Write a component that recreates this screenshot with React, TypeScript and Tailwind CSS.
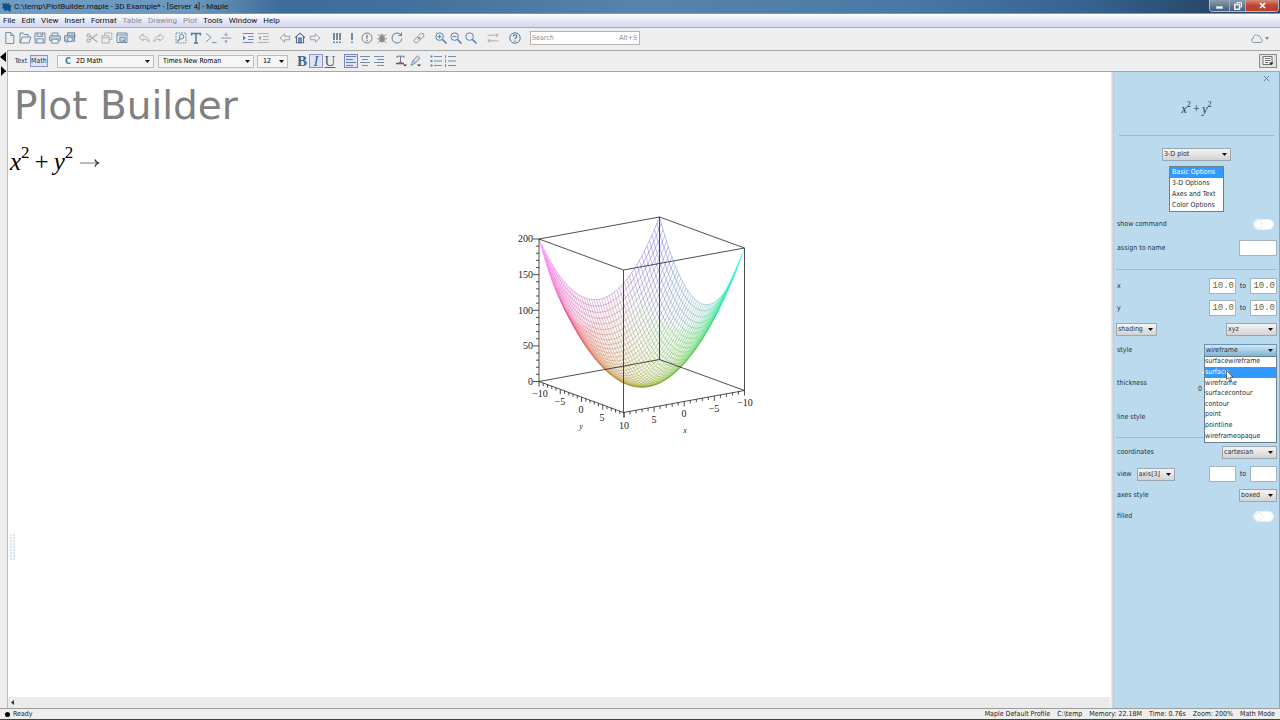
import { useState } from 'react';
import type { ReactNode } from 'react';
import clsx from 'clsx';

const BLUE = '#6483a3';
const GREY = '#a8a8a8';

interface IconProps {
    color?: string;
    width?: number;
    children: ReactNode;
}

function Icon({ color = BLUE, width = 0.9, children }: IconProps) {
    return (
        <svg
            className="w-3.5 h-3.5 shrink-0"
            viewBox="0 0 14 14"
            fill="none"
            stroke={color}
            strokeWidth={width}
            aria-hidden="true"
        >
            {children}
        </svg>
    );
}

interface Tool {
    label: string;
    icon: ReactNode;
}

const toolGroups: Tool[][] = [
    [
        { label: 'New', icon: <Icon><path d="M2.8 1.5h5l3 3v8h-8zM7.800 1.500v3h3" /></Icon> },
        { label: 'Open', icon: <Icon><path d="M2 12V2h3.2l1 1.5h4V6M2 12l2.400-6h8.600L11 12z" /></Icon> },
        { label: 'Save', icon: <Icon><path d="M2 2h10v10H2zM4.200 2v3.400h5.400V2M8 2.800v1.600M3.800 12V7.800h6.400V12" /></Icon> },
        {
            label: 'Print',
            icon: (
                <Icon>
                    <path d="M4 4.800V2h6v2.800" />
                    <rect x="1.6" y="4.8" width="10.8" height="5" rx="1" fill="#c3ccd6" />
                    <path d="M3.800 8.200h6.400v4H3.800z" fill="#f4f4f4" />
                </Icon>
            ),
        },
        {
            label: 'Print Preview',
            icon: (
                <Icon>
                    <path d="M4.500 4.500V1.800h7.200v4M1.600 4.800h10v5.400h-10z" fill="#c3ccd6" />
                    <circle cx="7" cy="8.4" r="2.4" fill="#eee" />
                    <path d="M5.200 10.200 3.400 12.400M9 7.500l3.500-3" />
                </Icon>
            ),
        },
    ],
    [
        {
            label: 'Cut',
            icon: (
                <Icon color={GREY} width={1.1}>
                    <circle cx="3.6" cy="4.4" r="1.6" />
                    <circle cx="3.6" cy="9.6" r="1.6" />
                    <path d="M5 5.300 12.400 11M5 8.700 12.400 3" />
                </Icon>
            ),
        },
        { label: 'Copy', icon: <Icon color={GREY}><path d="M4.500 4.200V2h7.300v6.400H9.400M2 4.800h7.200v7.200H2zM2 6.800h7.200" /></Icon> },
        { label: 'Paste', icon: <Icon><path d="M2 2h10v9.500H2zM2 4h10" /><path d="M4.800 6.200h5.400v4H4.800z" fill="#c5d3e0" /><path d="m8 9 3 3.300" /></Icon> },
    ],
    [
        { label: 'Undo', icon: <Icon color={GREY}><path d="M2 6.400 6.200 3v2c3.400 0 5.600 2 6 6-1.600-2.100-3.300-3-6-3v2z" /></Icon> },
        { label: 'Redo', icon: <Icon color={GREY}><path d="M12 6.400 7.800 3v2c-3.400 0-5.600 2-6 6 1.600-2.100 3.300-3 6-3v2z" /></Icon> },
    ],
    [
        {
            label: 'Code Region',
            icon: (
                <Icon width={1}>
                    <path d="M2 2h10v10H2z" strokeDasharray="1.6 1.1" />
                    <circle cx="7.6" cy="5.8" r="2.2" />
                    <path d="M6 7.600 3.400 10.600" strokeWidth="1.4" />
                </Icon>
            ),
        },
        { label: 'Text', icon: <Icon color="#4f79a3" width={1.5}><path d="M2.600 4.400v-2h8.800v2M7 2.400v9.400M5 11.900h4" /></Icon> },
        { label: 'Prompt', icon: <Icon><path d="m2.200 2.400 5 4-5 4.400M8 11.600h4.600" /></Icon> },
        { label: 'Section', icon: <Icon color="#7f93a8"><path d="M2 7h10M7 1.500v3M5.500 3.200 7 4.800l1.500-1.600M7 12.500v-3M5.500 10.800 7 9.200l1.500 1.600" /></Icon> },
    ],
    [
        { label: 'Indent', icon: <Icon><path d="M1.600 2.500h11M7 5.500h5.600M7 8.500h5.600M1.600 11.500h11" /><path d="m2 4.600 3 2.400-3 2.400z" fill={BLUE} stroke="none" /></Icon> },
        { label: 'Outdent', icon: <Icon color={GREY}><path d="M1.600 2.500h11M7 5.500h5.600M7 8.500h5.600M1.600 11.500h11" /><path d="m5 4.600-3 2.400 3 2.400z" fill={GREY} stroke="none" /></Icon> },
    ],
    [
        { label: 'Back', icon: <Icon color="#8d99a8"><path d="m2 7 4.600-4.200v2.400h5v3.600h-5v2.400z" /></Icon> },
        { label: 'Home', icon: <Icon color="#4c6e94" width={1.1}><path d="m2 6.600 5-4.400 5 4.400M3.500 5.800v6h7v-6" /><path d="M5.800 7h2.400v4.600H5.800z" fill="#8ba3bd" /></Icon> },
        { label: 'Forward', icon: <Icon color="#8d99a8"><path d="M12 7 7.400 2.800v2.400h-5v3.600h5v2.400z" /></Icon> },
    ],
    [
        { label: 'Execute All', icon: <Icon color="#446d95" width={1.5}><path d="M4 2v7M7 2v7M10 2v7M4 10.400V12M7 10.400V12M10 10.400V12" /></Icon> },
        { label: 'Execute', icon: <Icon color="#446d95" width={1.5}><path d="M7 2v7M7 10.400V12" /></Icon> },
        { label: 'Interrupt', icon: <Icon color="#858585" width={1}><circle cx="7" cy="7" r="5" /><path d="M7 3.800v4M7 8.800v1.400" strokeWidth="1.4" /></Icon> },
        {
            label: 'Debug',
            icon: (
                <Icon color="#8a8a8a">
                    <ellipse cx="7" cy="7.8" rx="2.4" ry="3.3" fill="#8a8a8a" />
                    <path d="M5.400 3.800h3.200M5 5 2.600 3.400M9 5l2.400-1.600M4.600 7.800H2M9.400 7.800H12M5 9.800l-2.400 2M9 9.800l2.400 2" />
                </Icon>
            ),
        },
        { label: 'Restart', icon: <Icon color="#5580aa" width={1}><path d="M11 4A5 5 0 1 0 12 7.600" /><path d="M11.500 1.500v3h-3" /></Icon> },
    ],
    [
        {
            label: 'Link',
            icon: (
                <Icon color="#8a9aab">
                    <ellipse cx="9" cy="5.2" rx="3.3" ry="2.3" transform="rotate(-40 9 5.2)" />
                    <ellipse cx="5" cy="9" rx="3.3" ry="2.3" transform="rotate(-40 5 9)" />
                    <path d="m5.500 8.600 3-3" />
                </Icon>
            ),
        },
    ],
    [
        { label: 'Zoom In', icon: <Icon color="#5c82a8" width={1}><circle cx="5.6" cy="5.6" r="3.8" /><path d="M3.600 5.600h4M5.600 3.600v4" /><path d="m8.500 8.500 4 4" strokeWidth="1.7" /></Icon> },
        { label: 'Zoom Out', icon: <Icon color="#5c82a8" width={1}><circle cx="5.6" cy="5.6" r="3.8" /><path d="M3.600 5.600h4" /><path d="m8.500 8.500 4 4" strokeWidth="1.7" /></Icon> },
        { label: 'Zoom Reset', icon: <Icon color="#5c82a8" width={1}><circle cx="5.6" cy="5.6" r="3.8" /><path d="m8.500 8.500 4 4" strokeWidth="1.7" /></Icon> },
    ],
    [{ label: 'Swap', icon: <Icon color={GREY}><path d="M1.500 4.200H12M10 2.500l2.200 1.700L10 6M12.500 9.800H2M4 8.100 1.800 9.800 4 11.500" /></Icon> }],
    [
        {
            label: 'Help',
            icon: (
                <Icon color="#4f7aa6" width={1}>
                    <circle cx="7" cy="7" r="5.2" />
                    <path d="M5.300 5.500c0-2.300 3.500-2.200 3.500 0C8.800 6.800 7 6.700 7 8.200M7 9.300v1.200" strokeWidth="1.2" />
                </Icon>
            ),
        },
    ],
];

const menus = [
    { label: 'File' },
    { label: 'Edit' },
    { label: 'View' },
    { label: 'Insert' },
    { label: 'Format' },
    { label: 'Table', disabled: true },
    { label: 'Drawing', disabled: true },
    { label: 'Plot', disabled: true },
    { label: 'Tools' },
    { label: 'Window' },
    { label: 'Help' },
];

const pages = ['Basic Options', '3-D Options', 'Axes and Text', 'Color Options'];

const styles = [
    'surfacewireframe',
    'surface',
    'wireframe',
    'surfacecontour',
    'contour',
    'point',
    'pointline',
    'wireframeopaque',
];

/* ---------- Plot ---------- */

const GRID = 48;

// u, v run over 0..1 for x, y in -10..10; z runs over 0..200
function project(u: number, v: number, z: number): [number, number] {
    return [659.5 - 120.5 * u + 85 * v, 359.5 + 22 * u + 31 * v - 0.7125 * z];
}

function height(u: number, v: number) {
    const x = u * 20 - 10;
    const y = v * 20 - 10;
    return x * x + y * y;
}

function buildMesh() {
    const lines: { a: [number, number]; b: [number, number]; color: string }[] = [];
    const add = (u1: number, v1: number, u2: number, v2: number) => {
        const z1 = height(u1, v1);
        const z2 = height(u2, v2);
        const r = Math.round(((u1 + u2) / 2) * 255);
        const g = Math.round(((v1 + v2) / 2) * 255);
        const b = Math.round(((z1 + z2) / 400) * 255);
        lines.push({ a: project(u1, v1, z1), b: project(u2, v2, z2), color: `rgb(${r},${g},${b})` });
    };
    for (let i = 0; i <= GRID; i++) {
        for (let j = 0; j <= GRID; j++) {
            const u = i / GRID;
            const v = j / GRID;
            if (i < GRID) add(u, v, (i + 1) / GRID, v);
            if (j < GRID) add(u, v, u, (j + 1) / GRID);
        }
    }
    return lines;
}

const mesh = buildMesh();
const ticks = Array.from({ length: 21 }, (_, i) => i);

function Plot() {
    return (
        <svg
            className="block w-[270px] h-[250px]"
            viewBox="500 200 270 250"
            role="img"
            aria-label="3-D wireframe plot"
        >
            <g strokeWidth="0.6" strokeOpacity="0.45">
                {mesh.map((l, i) => (
                    <line key={i} x1={l.a[0]} y1={l.a[1]} x2={l.b[0]} y2={l.b[1]} stroke={l.color} />
                ))}
            </g>
            <g stroke="#222" strokeWidth="0.8" fill="none">
                <path d="M539 381.500 659.500 359.500 744.500 390.500M659.500 359.500V217" />
                <path d="M539 239 659.500 217 744.500 248 623.500 270zM539 239v142.500l84.500 31 121-22V248M623.500 270v142.500" />
                {ticks.map((i) => {
                    const major = i % 5 === 0;
                    const [yx, yy] = project(1, i / 20, 0);
                    const [xx, xy] = project(i / 20, 1, 0);
                    const zy = 381.5 - 0.7125 * i * 10;
                    return (
                        <g key={i}>
                            <path d={`M${yx} ${yy}v${major ? 5 : 3}`} />
                            <path d={`M${xx} ${xy}v${major ? 5 : 3}`} />
                            <path d={`M539 ${zy}h${major ? -6 : -3}`} />
                        </g>
                    );
                })}
            </g>
            <g className="font-['Liberation_Serif',serif] text-[10px]" fill="#222">
                <g textAnchor="end">
                    <text x="533" y="242">200</text>
                    <text x="533" y="278">150</text>
                    <text x="533" y="314">100</text>
                    <text x="533" y="349">50</text>
                    <text x="533" y="385">0</text>
                </g>
                <g textAnchor="middle">
                    <text x="540" y="397">−10</text>
                    <text x="560" y="405">−5</text>
                    <text x="581" y="413">0</text>
                    <text x="602" y="421">5</text>
                    <text x="624" y="429">10</text>
                    <text x="654" y="423">5</text>
                    <text x="684" y="417">0</text>
                    <text x="714" y="412">−5</text>
                    <text x="745" y="406">−10</text>
                    <text x="581" y="429" className="italic text-[8px]">y</text>
                    <text x="685" y="433" className="italic text-[8px]">x</text>
                </g>
            </g>
        </svg>
    );
}

/* ---------- Controls ---------- */

interface PickerProps {
    label: string;
    value: string;
    className: string;
    flat?: boolean;
    open?: boolean;
}

function Picker({ label, value, className, flat, open }: PickerProps) {
    return (
        <span className={clsx('relative block h-[13px] shrink-0', className)}>
            <select
                aria-label={label}
                defaultValue={value}
                className={clsx(
                    'block w-full h-full appearance-none border leading-none',
                    flat
                        ? 'bg-[#f6f6f6] border-[#bdbdbd] pl-1'
                        : open
                          ? 'bg-linear-to-b from-[#d3e9f5] to-[#7fb3d3] border-[#6a95b3] pl-px'
                          : 'bg-linear-to-b from-[#f4f4f4] to-[#d3d3d3] border-[#9aa7b0] pl-px'
                )}
            >
                <option>{value}</option>
            </select>
            <svg className="absolute right-1 top-[5px] w-[5px] h-[3px] pointer-events-none" viewBox="0 0 5 3" aria-hidden="true">
                <path d="M0 0h5L2.500 3z" fill="#111" />
            </svg>
        </span>
    );
}

function Field({ label, value = '', className = 'w-[27px]' }: { label: string; value?: string; className?: string }) {
    return (
        <input
            type="text"
            aria-label={label}
            defaultValue={value}
            className={clsx(
                "h-4 bg-white border border-[#a3b4c0] pr-px text-right text-[9px] text-[#66663c] font-['Liberation_Mono',monospace]",
                className
            )}
        />
    );
}

function Toggle({ id }: { id: string }) {
    return (
        <input
            id={id}
            type="checkbox"
            role="switch"
            className="appearance-none mr-[3px] w-[21px] h-[11px] rounded-full bg-white border border-[#e6eff5] before:block before:w-[9px] before:h-[9px] before:rounded-full before:border before:border-[#e3e9ed]"
        />
    );
}

function Row({ className = 'h-[22px]', children }: { className?: string; children: ReactNode }) {
    return <div className={clsx('flex items-center justify-between pl-[3px] pr-0.5', className)}>{children}</div>;
}

function Range({ name, value }: { name: string; value?: string }) {
    return (
        <div className="flex items-center">
            <Field label={`${name} from`} value={value} />
            <span className="w-[14px] text-center">to</span>
            <Field label={`${name} to`} value={value} />
        </div>
    );
}

function Formula({ className, supClass }: { className?: string; supClass: string }) {
    return (
        <span className={clsx("font-['Liberation_Serif',serif] whitespace-nowrap", className)}>
            <i>x</i>
            <sup className={supClass}>2</sup>
            <span className="mx-[0.2em]">+</span>
            <i>y</i>
            <sup className={supClass}>2</sup>
        </span>
    );
}

/* ---------- Window parts ---------- */

function TitleBar() {
    return (
        <header className="flex items-start justify-between h-3.5 shrink-0 border-b border-[#8596ab] bg-[linear-gradient(90deg,#6f9cc4_0%,#6c98bf_15%,#3d6c97_22%,#42719b_32%,#5784aa_50%,#4a7aa4_70%,#35638e_85%,#27496b_94%)]">
            <div className="flex items-center h-[13px] pl-px">
                <svg className="w-3 h-3" viewBox="0 0 12 12" aria-hidden="true">
                    <path d="m1 2 2.500 1 .5-1.500L6 3l2-1 .5 2 2.500.5L9.500 7l1 2-2.500 1L6 9l-2 1.500L3 8 1 7l1-2z" fill="#0e5585" />
                    <path d="m5.500 7 4 4" stroke="#0e5585" />
                </svg>
                <h1 className="ml-px whitespace-nowrap text-[8px] text-[#111] font-['Roboto',sans-serif]">
                    C:\temp\PlotBuilder.maple - 3D Example* - [Server 4] - Maple
                </h1>
            </div>
            <div className="flex h-3 mr-px rounded-b-sm border border-t-0 border-[#aebccb] overflow-hidden">
                <button aria-label="Minimize" className="flex items-center justify-center w-5 bg-linear-to-b from-[#8a9eb2] to-[#425e7a] border-r border-[#9fb0c0]">
                    <span className="w-[7px] h-[3px] mt-1 bg-white border border-[#b9c5d0]" />
                </button>
                <button aria-label="Restore" className="flex items-center justify-center w-4 bg-linear-to-b from-[#8a9eb2] to-[#425e7a] border-r border-[#9fb0c0]">
                    <svg className="w-2 h-2" viewBox="0 0 8 8" fill="none" stroke="#eee">
                        <path d="M3 2V.5h4.500V5H6" />
                        <path d="M.8 2.500h4.700v4.700H.8z" strokeWidth="1.6" />
                    </svg>
                </button>
                <button aria-label="Close" className="flex items-center justify-center w-8 bg-linear-to-b from-[#d48a7c] via-[#c04330] to-[#b8402b]">
                    <svg className="w-[7px] h-[7px]" viewBox="0 0 7 7" stroke="#fff" strokeWidth="1.7">
                        <path d="m1 1 5 5M6 1 1 6" />
                    </svg>
                </button>
            </div>
        </header>
    );
}

function MenuBar() {
    return (
        <nav className="flex items-center gap-[6px] h-3.5 shrink-0 pl-[3px] border-b border-[#a9a9b4] bg-linear-to-b from-white via-[#e6e8f6] to-[#d5d9ee] text-[8px] font-['Roboto',sans-serif]">
            {menus.map((m) => (
                <button key={m.label} disabled={m.disabled} className={m.disabled ? 'text-[#8a8a92]' : 'text-[#111]'}>
                    {m.label}
                </button>
            ))}
        </nav>
    );
}

function MainToolbar() {
    return (
        <div className="flex items-center h-[22px] shrink-0 pl-0.5 pb-0.5">
            <div className="flex gap-[7px]">
                {toolGroups.map((group, i) => (
                    <div key={i} className="flex">
                        {group.map((tool) => (
                            <button key={tool.label} aria-label={tool.label} className="flex justify-center w-[15px]">
                                {tool.icon}
                            </button>
                        ))}
                    </div>
                ))}
            </div>
            <label className="flex items-center ml-2 w-[110px] h-3.5 bg-white border border-[#b5b5b5] pl-px pr-0.5 text-[#8c8c8c]">
                <input
                    type="search"
                    aria-label="Search"
                    placeholder="Search"
                    className="flex-1 min-w-0 bg-transparent outline-none placeholder:text-[#8c8c8c]"
                />
                <span>Alt+S</span>
            </label>
            <button aria-label="MapleCloud" className="flex items-center gap-px ml-auto mr-[11px]">
                <Icon color="#7a90a8">
                    <path d="M3.500 11.500a2.300 2.300 0 0 1 0-4.500C3 4.500 6 2.500 8 5c2-.5 3 1 2.600 2.500 2 .5 2 3.500.4 4z" />
                </Icon>
                <svg className="w-1 h-[3px]" viewBox="0 0 5 3"><path d="M0 0h5L2.500 3z" fill="#777" /></svg>
            </button>
        </div>
    );
}

function FormatToolbar() {
    return (
        <div className="flex h-[22px] shrink-0">
            <div className="w-[7px] pt-0.5">
                <svg className="w-1.5 h-2.5" viewBox="0 0 6 10" aria-hidden="true"><path d="M6 0v10L0 5z" fill="#000" /></svg>
                <svg className="mt-1 w-1.5 h-1.5" viewBox="0 0 6 6" aria-hidden="true"><path d="m1 0 5 5v1H1z" fill="#000" /></svg>
            </div>
            <div className="flex flex-1 items-center min-w-0 border-y border-l border-[#a6a6a6]">
                <button className="ml-1 w-[18px] text-[#333]">Text</button>
                <button className="w-[18px] h-3 border border-[#8a94c8] bg-[#dfe3f6] text-[#333]" aria-pressed="true">Math</button>
                <div className="relative ml-[9px]">
                    <Picker label="Style" value="2D Math" className="w-[97px] [&>select]:pl-[18px]" flat />
                    <span className="absolute left-2 top-[2px] text-[9px] leading-[9px] font-bold text-[#2f7ca8]">C</span>
                </div>
                <Picker label="Font" value="Times New Roman" className="ml-1 w-24" flat />
                <Picker label="Size" value="12" className="ml-[3px] w-[31px] [&>select]:pl-[5px]" flat />
                <div className="flex items-center ml-[7px] font-['Liberation_Serif',serif] text-[15px] leading-none text-[#41658c]">
                    <button aria-label="Bold" className="w-3.5 font-bold">B</button>
                    <button aria-label="Italic" aria-pressed="true" className="w-3.5 h-3.5 leading-3 italic border border-[#8a94c8] bg-[#dfe3f6]">I</button>
                    <button aria-label="Underline" className="w-3.5 underline">U</button>
                </div>
                <div className="flex items-center ml-[7px]">
                    <button aria-label="Align left" aria-pressed="true" className="border border-[#7688c4] bg-[#dfe3f6] h-3.5 w-3.5">
                        <svg className="w-3 h-3" viewBox="0 0 12 12" stroke={BLUE} strokeWidth="1"><path d="M1 1.500h10M1 4.500h7M1 7.500h10M1 10.500h7" /></svg>
                    </button>
                    <button aria-label="Align center" className="w-3.5"><Icon><path d="M2 2.500h10M4 5.500h6M2 8.500h10M4 11.500h6" /></Icon></button>
                    <button aria-label="Align right" className="w-3.5"><Icon><path d="M2 2.500h10M5 5.500h7M2 8.500h10M5 11.500h7" /></Icon></button>
                </div>
                <div className="flex items-center ml-2">
                    <button aria-label="Text color" className="w-3.5">
                        <Icon color="#5d6f88"><path d="M3 4V2.200h7V4M6.500 2.200V8M5 8.200h3" /><path d="M2 9.500h8" stroke="#c3343a" strokeWidth="1.6" /><path d="M9 10.500h4l-2 2z" fill="#333" stroke="none" /></Icon>
                    </button>
                    <button aria-label="Highlight color" className="w-3.5">
                        <Icon color="#6e86a3"><path d="M3 11.500 5 6.500l4.500-4.700L11.800 4 7.500 9zM5 6.500 7.500 9" fill="#d5dfea" /><path d="M9 10.500h4l-2 2z" fill="#333" stroke="none" /></Icon>
                    </button>
                </div>
                <div className="flex items-center ml-[7px]">
                    <button aria-label="Bullets" className="w-3.5"><Icon><path d="M5 2.500h8M5 7h8M5 11.500h8" /><path d="M1.500 2.500h2M1.500 7h2M1.500 11.500h2" strokeWidth="2" /></Icon></button>
                    <button aria-label="Numbering" className="w-3.5"><Icon><path d="M5 2.500h8M5 7h8M5 11.500h8" /><path d="M2.500 1v3M2.500 5.500v3M2.500 10v3" /></Icon></button>
                </div>
                <button aria-label="Context panel" className="flex items-center justify-center ml-auto mr-[3px] w-[18px] h-3.5 border border-[#8c8c8c] bg-[#e2e2e2]">
                    <svg className="w-3 h-2.5" viewBox="0 0 12 10" fill="#f6f6f6" stroke="#666" strokeWidth="0.9">
                        <path d="M1 .5h9v8H1zM3 2.500h5.500M3 4.500h5.500M3 6.500h3" />
                        <path d="M7 6.500h4.500L9.300 9z" fill="#222" stroke="none" />
                    </svg>
                </button>
            </div>
        </div>
    );
}

function Worksheet() {
    return (
        <main className="flex flex-col flex-1 min-w-0 bg-white border-l border-[#bcbcbc]">
            <div className="flex-1 min-h-0 overflow-hidden">
                <h2 className="pl-[6px] pt-2.5 text-[39px] leading-[48px] text-[#808080] font-['DejaVu_Sans',sans-serif]">Plot Builder</h2>
                <div className="flex items-center gap-[7px] h-[50px] mt-1.5 pl-0.5 text-black">
                    <Formula className="text-[25px]" supClass="text-[17px] -top-3" />
                    <svg className="w-5 h-2.5 mt-1" viewBox="0 0 20 10" fill="none" stroke="#333" aria-hidden="true">
                        <path d="M0 5h18" stroke="#777" />
                        <path d="M15 1.500c.5 2 2 3 4 3.500-2 .5-3.500 1.500-4 3.500" strokeWidth="1.2" />
                    </svg>
                </div>
                <div className="mt-3.5 ml-[492px]">
                    <Plot />
                </div>
                <div className="grid grid-cols-2 gap-px mt-[84px] ml-0.5 w-[5px]">
                    {Array.from({ length: 18 }, (_, i) => (
                        <span key={i} className="h-0.5 bg-[#d9e4f0]" />
                    ))}
                </div>
            </div>
            <div className="flex items-center h-[11px] shrink-0 pl-[3px] bg-[#ebebeb]">
                <button aria-label="Scroll left">
                    <svg className="w-[3px] h-[5px]" viewBox="0 0 3 5"><path d="M3 0v5L0 2.500z" fill="#333" /></svg>
                </button>
            </div>
        </main>
    );
}

function ContextPanel() {
    const [style, setStyle] = useState('surface');
    const [page, setPage] = useState('Basic Options');

    return (
        <aside className="w-[166px] shrink-0 bg-[#bbdaee] border-r border-[#8fa9ba] text-[#24303a]">
            <div className="flex justify-end items-center h-3 pr-2.5">
                <button aria-label="Close panel">
                    <svg className="w-[5px] h-[5px]" viewBox="0 0 5 5" stroke="#5d86a6"><path d="m0 0 5 5M5 0 0 5" /></svg>
                </button>
            </div>
            <div className="flex items-center justify-center h-[51px]">
                <Formula className="text-[12px]" supClass="text-[8px] -top-1.5" />
            </div>
            <hr className="mx-[5px] border-[#9fb9ca]" />
            <div className="flex flex-col items-center pt-3">
                <Picker label="Plot type" value="3-D plot" className="w-[69px]" />
                <ul role="listbox" aria-label="Options page" className="flex flex-col mt-[5px] w-[55px] h-[46px] bg-white border border-[#6b7f8e]">
                    {pages.map((o) => (
                        <li
                            key={o}
                            role="option"
                            aria-selected={o === page}
                            onClick={() => setPage(o)}
                            className={clsx('flex flex-1 items-center pl-0.5 whitespace-nowrap', o === page && 'bg-[#3399ff] text-white')}
                        >
                            {o}
                        </li>
                    ))}
                </ul>
            </div>
            <Row className="h-6">
                <label htmlFor="show-command">show command</label>
                <Toggle id="show-command" />
            </Row>
            <Row className="h-6">
                <span>assign to name</span>
                <Field label="assign to name" className="w-[38px]" />
            </Row>
            <hr className="mt-[9px] mx-0.5 border-[#9fb9ca]" />
            <Row className="h-[22px] mt-[5px]">
                <span>x</span>
                <Range name="x" value="10.0" />
            </Row>
            <Row>
                <span>y</span>
                <Range name="y" value="10.0" />
            </Row>
            <div className="flex items-center justify-between h-5 px-0.5">
                <Picker label="Shading type" value="shading" className="w-[41px]" />
                <Picker label="Shading" value="xyz" className="w-[51px]" />
            </div>
            <Row>
                <span>style</span>
                <div className="relative">
                    <Picker label="Style" value="wireframe" className="w-[73px]" open />
                    <ul role="listbox" aria-label="Style" className="absolute z-10 right-0 top-3 flex flex-col w-[73px] h-[87px] bg-white border border-[#6b7f8e]">
                        {styles.map((s) => (
                            <li
                                key={s}
                                role="option"
                                aria-selected={s === style}
                                onClick={() => setStyle(s)}
                                className={clsx('flex flex-1 items-center whitespace-nowrap', s === style && 'bg-[#3399ff] text-white')}
                            >
                                {s}
                            </li>
                        ))}
                    </ul>
                    {/* mouse pointer */}
                    <svg className="absolute z-20 left-[22px] top-[26px] w-2 h-3 pointer-events-none" viewBox="0 0 8 12" aria-hidden="true">
                        <path d="M.5.5v9l2-1.800L4 11l1.500-.7L4 7.200h3z" fill="#fff" stroke="#333" strokeWidth="0.7" />
                    </svg>
                </div>
            </Row>
            <Row className="h-11">
                <label htmlFor="thickness">thickness</label>
                <div className="flex flex-col w-[79px]">
                    <input id="thickness" type="range" min="0" max="10" defaultValue="5" className="appearance-none ml-1 h-px bg-white" />
                    <span className="mt-3">0</span>
                </div>
            </Row>
            <Row className="h-6">
                <span>line style</span>
            </Row>
            <hr className="mt-2 mx-0.5 border-[#9fb9ca]" />
            <Row className="h-[22px] mt-[3px]">
                <span>coordinates</span>
                <Picker label="Coordinates" value="cartesian" className="w-[55px]" />
            </Row>
            <Row>
                <div className="flex items-center gap-[5px]">
                    <span>view</span>
                    <Picker label="View axis" value="axis[3]" className="w-[38px]" />
                </div>
                <Range name="view" />
            </Row>
            <Row className="h-[21px]">
                <span>axes style</span>
                <Picker label="Axes style" value="boxed" className="w-[38px]" />
            </Row>
            <Row className="h-[21px]">
                <label htmlFor="filled">filled</label>
                <Toggle id="filled" />
            </Row>
        </aside>
    );
}

function StatusBar() {
    return (
        <footer className="flex items-center h-3 shrink-0 px-[5px] border-t border-t-[#9c9c9c] border-b border-b-[#3a4350] text-[#222]">
            <span className="w-[5px] h-[5px] rounded-full bg-black" />
            <span className="ml-[3px]">Ready</span>
            <div className="flex gap-[7px] ml-auto whitespace-nowrap">
                <span>Maple Default Profile</span>
                <span>C:\temp</span>
                <span>Memory: 22.18M</span>
                <span>Time: 0.76s</span>
                <span>Zoom: 200%</span>
                <span>Math Mode</span>
            </div>
        </footer>
    );
}

export default function App() {
    return (
        <div className="flex flex-col h-screen overflow-hidden bg-[#eeeeee] text-[7px] leading-[9px] font-['DejaVu_Sans_Condensed','DejaVu_Sans',sans-serif]">
            <TitleBar />
            <MenuBar />
            <MainToolbar />
            <FormatToolbar />
            <div className="flex flex-1 min-h-0">
                <div className="w-[7px] shrink-0">
                    <svg className="w-1.5 h-1" viewBox="0 0 6 4" aria-hidden="true"><path d="M1 0h4L1 4z" fill="#000" /></svg>
                </div>
                <Worksheet />
                <div className="w-1 shrink-0 bg-linear-to-r from-white to-[#c4c4c4]" />
                <ContextPanel />
            </div>
            <StatusBar />
        </div>
    );
}
